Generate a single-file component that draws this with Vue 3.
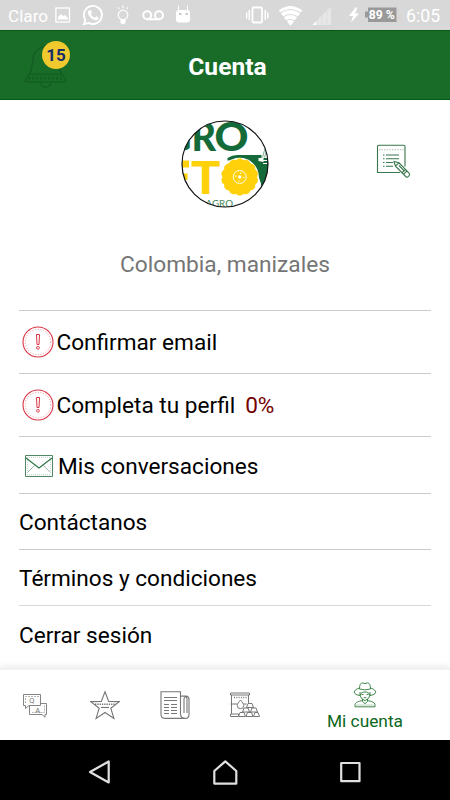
<script setup>
const rows = [
  { label: 'Confirmar email', icon: 'alert', kind: 'tall' },
  { label: 'Completa tu perfil', icon: 'alert', kind: 'tall', value: '0%' },
  { label: 'Mis conversaciones', icon: 'mail', kind: 'mid' },
  { label: 'Contáctanos' },
  { label: 'Términos y condiciones', kind: 'soft' },
  { label: 'Cerrar sesión' },
]
const toothAngles = Array.from({ length: 14 }, (_, i) => (i * 360) / 14)
</script>

<template>
  <div class="screen">
    <div class="status">
      <span class="carrier">Claro</span>
      <svg class="status-left" width="145" height="30" viewBox="50 0 145 30" fill="none" stroke="#fff">
        <rect x="55.900" y="8" width="13.600" height="14" stroke-width="1.300" />
        <path d="M58 19.500V17l3-3 2 2 2-1 3 3v1.500z" fill="#fff" stroke="none" />
        <path d="M84 24.200l1.300-4.500a9 9 0 1 1 3.500 3.200z" stroke-width="1.900" />
        <path d="M89.200 10.300c.8-.8 1.700-.3 2 .5l.7 1.800-1 1.500c1 1.800 2 2.800 3.800 3.600l1.400-1.400 2.500 1.300c.3 2-1.400 2.900-3 2.700-4-.7-8-5-7.700-8.300 0-.7.500-1.200 1.300-1.700z" fill="#fff" stroke="none" />
        <circle cx="123" cy="15" r="4.800" stroke-width="1.200" />
        <path d="M120.500 19h5v3.500l-1.500 1.800h-2l-1.500-1.800z" fill="#fff" stroke="none" />
        <path d="M123 8V5.500M119.200 9l-1-1.800M126.800 9l1-1.800" stroke-width="1.200" />
        <circle cx="147.200" cy="15.200" r="4" stroke-width="2" />
        <circle cx="159" cy="15.200" r="4" stroke-width="2" />
        <path d="M147 19.300h12" stroke-width="2" />
        <rect x="176" y="10" width="14" height="12.500" rx="3" fill="#fff" stroke="none" />
        <path d="M178.500 10V5.800M187.500 10V5.800" stroke-width="1" />
        <path d="M179 14h2.500M185.500 14h2.500" stroke="#bbb" stroke-width="1.300" />
      </svg>
      <svg class="status-right" width="158" height="30" viewBox="243 0 158 30" fill="none" stroke="#fff">
        <rect x="252.500" y="7.500" width="9.500" height="15" rx="1" stroke-width="1.800" />
        <path d="M249.300 10v10M246.700 12.500v6M265.300 10v10M267.900 12.500v6" stroke-width="1.500" />
        <path d="M278.800 10.500Q290.500 1.500 302.300 10.500L290.500 26z" fill="#fff" stroke="none" />
        <path d="M280 13q10.500-7 21 0M283 17q7.500-5 15 0M286 21q4.500-3 9 0" stroke="#d8d8d8" stroke-width="1.200" />
        <path d="M312.500 25L331 6.500V25z" fill="#e7e7e7" stroke="none" />
        <path d="M312.500 25l4-4v4z" fill="#fff" stroke="none" />
        <path d="M317 8v17M322 8v17M327 8v17" stroke="#dadada" stroke-width=".7" />
        <path d="M355.500 7.500L349 16h4l-2 6.500 8-9h-4l2.500-6z" fill="#fff" stroke="none" />
        <path d="M368 7.500h28.500v14.500H368v-4.500h-3v-6h3z" fill="#999" stroke="none" />
        <text x="368.800" y="19" class="battery" textLength="26" lengthAdjust="spacingAndGlyphs">89 %</text>
      </svg>
      <span class="clock">6:05</span>
    </div>

    <header class="header">
      <div class="bell">
        <svg width="48" height="56" viewBox="20 36 48 56" fill="none" stroke="#125c23" stroke-width="1.300">
          <path d="M43 45.500c-7 2-10 8-10.500 15-.5 6-1 9.500-3.500 13.500M43 45.500a3 3 0 0 1 5 0c7 2 10 8 10.500 15 .5 6 1 9.500 3.500 13.500M29 73.200h33l3.800 6q.3 1.600-1.300 1.600h-38q-1.500 0-1.200-1.600zM40.500 81a5.200 5.200 0 0 0 10.400 0" />
          <path d="M28.500 77.300h34" stroke-width="3" stroke-dasharray="1.500 2.500" />
        </svg>
        <span class="badge">15</span>
      </div>
      <h1 class="title">Cuenta</h1>
    </header>

    <main class="content">
      <section class="profile">
        <svg class="avatar" width="90" height="90" viewBox="180 119 90 90">
          <defs><clipPath id="avatar-clip"><circle cx="225" cy="164" r="43" /></clipPath></defs>
          <g clip-path="url(#avatar-clip)">
            <text x="164" y="151.300" class="brand brand-green" font-size="39" textLength="52" lengthAdjust="spacingAndGlyphs">GR</text>
            <text x="214.500" y="151.300" class="brand brand-green" font-size="39" textLength="34" lengthAdjust="spacingAndGlyphs">O</text>
            <path d="M227.500 158q5-3.300 11-3h23v3h-3v3l5 1v-4h7v30h-9q-1-12-8-17.500v-5l-4-1v-4h-12q-6-.5-10 0z" fill="#146b39" />
            <path d="M262.500 157.500l3-11M264.500 157.500l3-10" fill="none" stroke="#5d9776" stroke-width=".8" />
            <path d="M263 160.500h5M263 163.500h4" stroke="#fff" stroke-width="1.100" />
            <path d="M170 160.500h19v7h-19zM170 173.500h17.500v6.500H170zM170 187h19v6.500h-19z" fill="#fed10a" />
            <text x="191" y="193.500" class="brand brand-yellow" font-size="46" textLength="29.500" lengthAdjust="spacingAndGlyphs">T</text>
            <circle cx="239.700" cy="177" r="19.200" fill="#fff" />
            <circle cx="239.700" cy="177" r="17.600" fill="#fed10a" />
            <rect v-for="angle in toothAngles" :key="angle" x="237.200" y="158.500" width="5" height="3" rx="1.200" fill="#fed10a" :transform="`rotate(${angle} 239.700 177)`" />
            <circle cx="239.700" cy="177" r="6.500" fill="none" stroke="#fff" stroke-width=".9" />
            <circle cx="239.700" cy="177" r="4" fill="none" stroke="#fff" stroke-width="1.200" stroke-dasharray="1.200 5.083" />
            <circle cx="239.700" cy="177" r="1.700" fill="#fff" />
            <text x="205.500" y="207" class="tagline" textLength="27.500" lengthAdjust="spacingAndGlyphs">AGRO</text>
          </g>
          <circle cx="225" cy="164" r="43" fill="none" stroke="#111" stroke-width="1.200" />
        </svg>
        <svg class="edit" width="36" height="36" viewBox="376 143 36 36" fill="none" stroke="#39774c" stroke-width="1.100">
          <path d="M400 172.500h-22.500v-26q0-1.300 1.300-1.300h24.900q1.300 0 1.300 1.300v20" />
          <path d="M379 149.700h25" stroke="#9abaa3" stroke-dasharray="1.300 1.300" />
          <path d="M383 155h1.500M386 155h13M383 158.700h1.500M386 158.700h13M383 162.500h1.500M386 162.500h7M383 166.300h1.500M386 166.300h7" />
          <path d="M394 161.500l5 1.300 10.300 10.500q.9 1.500-.5 2.900-1.400 1.500-2.900.5L395.300 166zM399 162.800l-3.700 3.200M405.500 169.500l-4 3.700M407 171l-4 3.700M399 165.500l5 5.200" fill="#fff" />
        </svg>
      </section>
      <p class="location">Colombia, manizales</p>

      <ul class="list">
        <li v-for="row in rows" :key="row.label" class="row" :class="row.kind">
          <svg v-if="row.icon === 'alert'" class="alert" width="32" height="32" viewBox="0 0 32 32" fill="none" stroke="#d83445">
            <circle cx="16" cy="16" r="15" stroke-width="1.100" />
            <circle cx="16" cy="16" r="12.700" stroke="#e37782" stroke-width=".8" stroke-dasharray="1 1.700" />
            <path d="M14.500 8.500h3l-.5 10h-2z" stroke-width="1" />
            <rect x="14.700" y="20.500" width="2.500" height="2.500" rx=".7" stroke-width="1" />
          </svg>
          <svg v-if="row.icon === 'mail'" class="mail" width="28" height="22" viewBox="0 0 28 22" fill="none" stroke="#4f8864">
            <path d="M.5 .5h27v21H.5z" />
            <path d="M2 2.300h24M2 19.700h24M2.300 3v16M25.700 3v16" stroke="#a0bea9" stroke-width=".7" stroke-dasharray="1 1" />
            <path d="M1 3l13 10L27 3" stroke="#287540" stroke-width="1.100" />
            <path d="M3 17l7-7M25 17l-7-7" stroke="#a0bea9" />
          </svg>
          <span class="label">{{ row.label }}</span>
          <span v-if="row.value" class="label value">{{ row.value }}</span>
        </li>
      </ul>
    </main>

    <nav class="tabs">
      <div class="tab">
        <svg width="26" height="26" viewBox="22 692 26 26" fill="none" stroke="#777" stroke-width=".9">
          <path d="M29 705.500h11.500v-11H23.500v11h2v3z" />
          <path d="M41 703.500h5.500v11H45v2.700l-3-2.700H29.500v-9" />
          <path d="M25.500 703v-6.500H39M44.500 705.500v7H32" stroke="#aaa" stroke-dasharray="2 1" />
          <text x="29.300" y="703.300" class="qa">Q</text>
          <text x="35.300" y="712.500" class="qa">A</text>
        </svg>
      </div>
      <div class="tab">
        <svg width="30" height="30" viewBox="90 690 30 30" fill="none" stroke="#757575" stroke-width="1.100">
          <path d="M105 691.800l3.700 9.700 10.600.1-8.500 6.600 3.100 10.200-8.900-5.900-8.900 5.900 3.100-10.200-8.500-6.600 10.600-.1z" />
          <path d="M95 704.300h21" stroke-width="1.500" stroke-dasharray="1.300 1" />
          <path d="M101 707.500h8" />
        </svg>
      </div>
      <div class="tab">
        <svg width="30" height="30" viewBox="160 690 30 30" fill="none" stroke="#777" stroke-width="1.100">
          <path d="M185 718.400h-20q-4-.4-4-4v-22.600h19.500v22.600q.5 4 4.500 4t4-4v-15q0-3-3-3.300h-5.500M184 713v-14q0-2 1.500-2t1.500 2v14" />
          <path d="M164 697.500h13M164 700.500h13M164 704.500h5M171 704.500h6M164 707.500h5M171 707.500h6M164 710.500h5M171 710.500h6M164 713.500h5M171 713.500h6" />
        </svg>
      </div>
      <div class="tab">
        <svg width="31" height="26" viewBox="230 692 31 26" fill="none" stroke="#777" stroke-width="1">
          <path d="M230.500 693h19v2h-19zM231.500 695v19M248.500 695v8M230.500 704h7M243.500 704h3M230.500 714h8v2.500h-8z" />
          <path d="M234 697.500h13" stroke-width="1.500" stroke-dasharray="1 1.300" />
          <path d="M240.500 700c-2 2.500-3.200 4-3.200 5.500a3.200 3.200 0 0 0 6.400 0c0-1.500-1.200-3-3.200-5.500z" fill="#fff" />
          <path d="M246.500 707.500l1.500-4h4l1.500 4zM242.500 712l1.500-4h4l1.500 4zM250.500 712l1.500-4h4l1.500 4zM238.500 716.500l1.500-4h4l1.500 4zM246 716.500l1.500-4h4l1.500 4zM253.500 716.500l1.500-4h3l1.500 4z" fill="#fff" />
        </svg>
      </div>
      <div class="tab active">
        <svg width="24" height="26" viewBox="353 682 24 26" fill="none" stroke="#2b793a" stroke-width=".9">
          <path d="M359.500 689q0-6 3-6.200l2.500.9 2.500-.9q3 .2 3 6.200-5.500 1.700-11 0z" />
          <path d="M359.500 688c-3.500 1-5.200 2.800-5.200 4.200 0 1.800 3 3 5.700 3.300 1-3 2.500-3.500 5-3.500s4 .5 5 3.500c2.700-.3 5.700-1.500 5.700-3.300 0-1.400-1.700-3.200-5.200-4.200" />
          <path d="M360 692v3q.5 4 5 5.700 4.500-1.700 5-5.700v-3M361.500 694.500h2M366.500 694.500h2M363.700 697.700h2.600M362.500 699v2.500l2.500 2.200 2.500-2.200V699M362.500 700.500c-4 1-7 1.500-7.500 4v2.300h20v-2.300c-.5-2.500-3.500-3-7.500-4" />
          <path d="M356.500 705h17" stroke="#70a078" stroke-dasharray="1 1" />
        </svg>
        <span class="tab-label">Mi cuenta</span>
      </div>
    </nav>

    <div class="system">
      <svg width="24" height="26" viewBox="88 759 24 26" fill="none" stroke="#e0e0e0" stroke-width="2.200" stroke-linejoin="round"><path d="M108.700 761.500v21L90 772z" /></svg>
      <svg width="28" height="28" viewBox="211 757 28 28" fill="none" stroke="#e0e0e0" stroke-width="2.200" stroke-linejoin="round"><path d="M214.300 782.600V770l11-9.700 11 9.700v12.600z" /></svg>
      <svg width="24" height="24" viewBox="338 760 24 24" fill="none" stroke="#e0e0e0" stroke-width="2.200" stroke-linejoin="round"><path d="M341.200 763h18.300v18.200h-18.300z" /></svg>
    </div>
  </div>
</template>

<style>
body {
  margin: 0;
}
</style>

<style scoped>
.screen {
  width: 450px;
  height: 800px;
  display: flex;
  flex-direction: column;
  background: #fff;
  font-family: Roboto, sans-serif;
  overflow: hidden;
}
svg {
  display: block;
  flex: none;
}
.status {
  height: 30px;
  display: flex;
  align-items: center;
  background: #d8d8d8;
  color: #fff;
  box-sizing: border-box;
  padding-left: 8px;
}
.carrier {
  width: 42px;
  font-size: 17.2px;
  line-height: 30px;
  padding-top: 2px;
}
.status-right {
  margin-left: 48px;
}
.battery {
  font: bold 12.5px Roboto, sans-serif;
  fill: #fff;
  stroke: none;
}
.clock {
  margin-left: 5px;
  padding-top: 2px;
  font-size: 17.7px;
  line-height: 28px;
  white-space: nowrap;
}
.header {
  height: 70px;
  box-sizing: border-box;
  background: #196c27;
  border-top: 1px solid #065b12;
  border-bottom: 1px solid #075a12;
  display: grid;
  grid-template-columns: 90px 1fr 85px;
  align-items: center;
}
.bell {
  position: relative;
  width: 48px;
  height: 56px;
  margin-left: 20px;
}
.badge {
  position: absolute;
  left: 22px;
  top: 4px;
  width: 28px;
  height: 28px;
  border-radius: 50%;
  background: #f0c92e;
  color: #162d6a;
  font-size: 17px;
  font-weight: bold;
  line-height: 29px;
  text-align: center;
}
.title {
  margin: 4px 0 0;
  color: #fff;
  font-size: 24.6px;
  line-height: 30px;
  font-weight: bold;
  text-align: center;
}
.content {
  height: 568px;
  padding: 0 19px;
}
.profile {
  height: 128px;
  padding-top: 19px;
  box-sizing: border-box;
  display: grid;
  grid-template-columns: 161px 1fr 36px;
  padding-right: 19px;
}
.avatar {
  grid-column: 2;
}
.edit {
  margin-top: 24px;
}
.brand {
  font-family: Lato, sans-serif;
  font-weight: 900;
}
.brand-green {
  fill: #146b39;
}
.brand-yellow {
  fill: #fed10a;
}
.tagline {
  font: 10px Lato, sans-serif;
  fill: #438760;
}
.location {
  margin: 22px 0 30px;
  height: 30px;
  line-height: 29px;
  font-size: 22.7px;
  color: #757575;
  text-align: center;
}
.list {
  margin: 0;
  padding: 0;
  list-style: none;
  border-top: 1px solid #ccc;
}
.row {
  height: 56px;
  box-sizing: border-box;
  display: flex;
  align-items: center;
  border-bottom: 1px solid #ccc;
  font-size: 22.6px;
  line-height: 28px;
  padding-top: 1px;
  white-space: nowrap;
}
.row.tall {
  height: 63px;
  padding-top: 0;
}
.row.mid {
  height: 57px;
}
.row.soft {
  border-bottom-color: #d9d9d9;
}
.row:last-child {
  border-bottom: 0;
}
.label {
  padding-top: 2px;
}
.alert {
  margin: 0 3px 1px 2.5px;
}
.mail {
  margin: 0 5px 0 6px;
}
.value {
  color: #740000;
  margin-left: 10px;
}
.tabs {
  height: 72px;
  box-sizing: border-box;
  padding-top: 2px;
  display: grid;
  grid-template-columns: 70px 70px 70px 70px 170px;
  background: linear-gradient(#efefef, #f4f4f4 2px, #fff 2px);
  box-shadow: 0 -2px 6px rgba(0, 0, 0, 0.08);
}
.tab {
  display: flex;
  flex-direction: column;
  align-items: center;
  justify-content: center;
}
.tab.active {
  color: #0b671b;
  justify-content: flex-start;
  padding-top: 12px;
}
.tab-label {
  margin-top: 3px;
  font-size: 17.3px;
  line-height: 20px;
}
.qa {
  font: 7.500px Roboto, sans-serif;
  fill: #777;
  stroke: none;
}
.system {
  height: 60px;
  box-sizing: border-box;
  padding: 3px 88px 0;
  background: #000;
  display: flex;
  align-items: center;
  justify-content: space-between;
}
</style>
